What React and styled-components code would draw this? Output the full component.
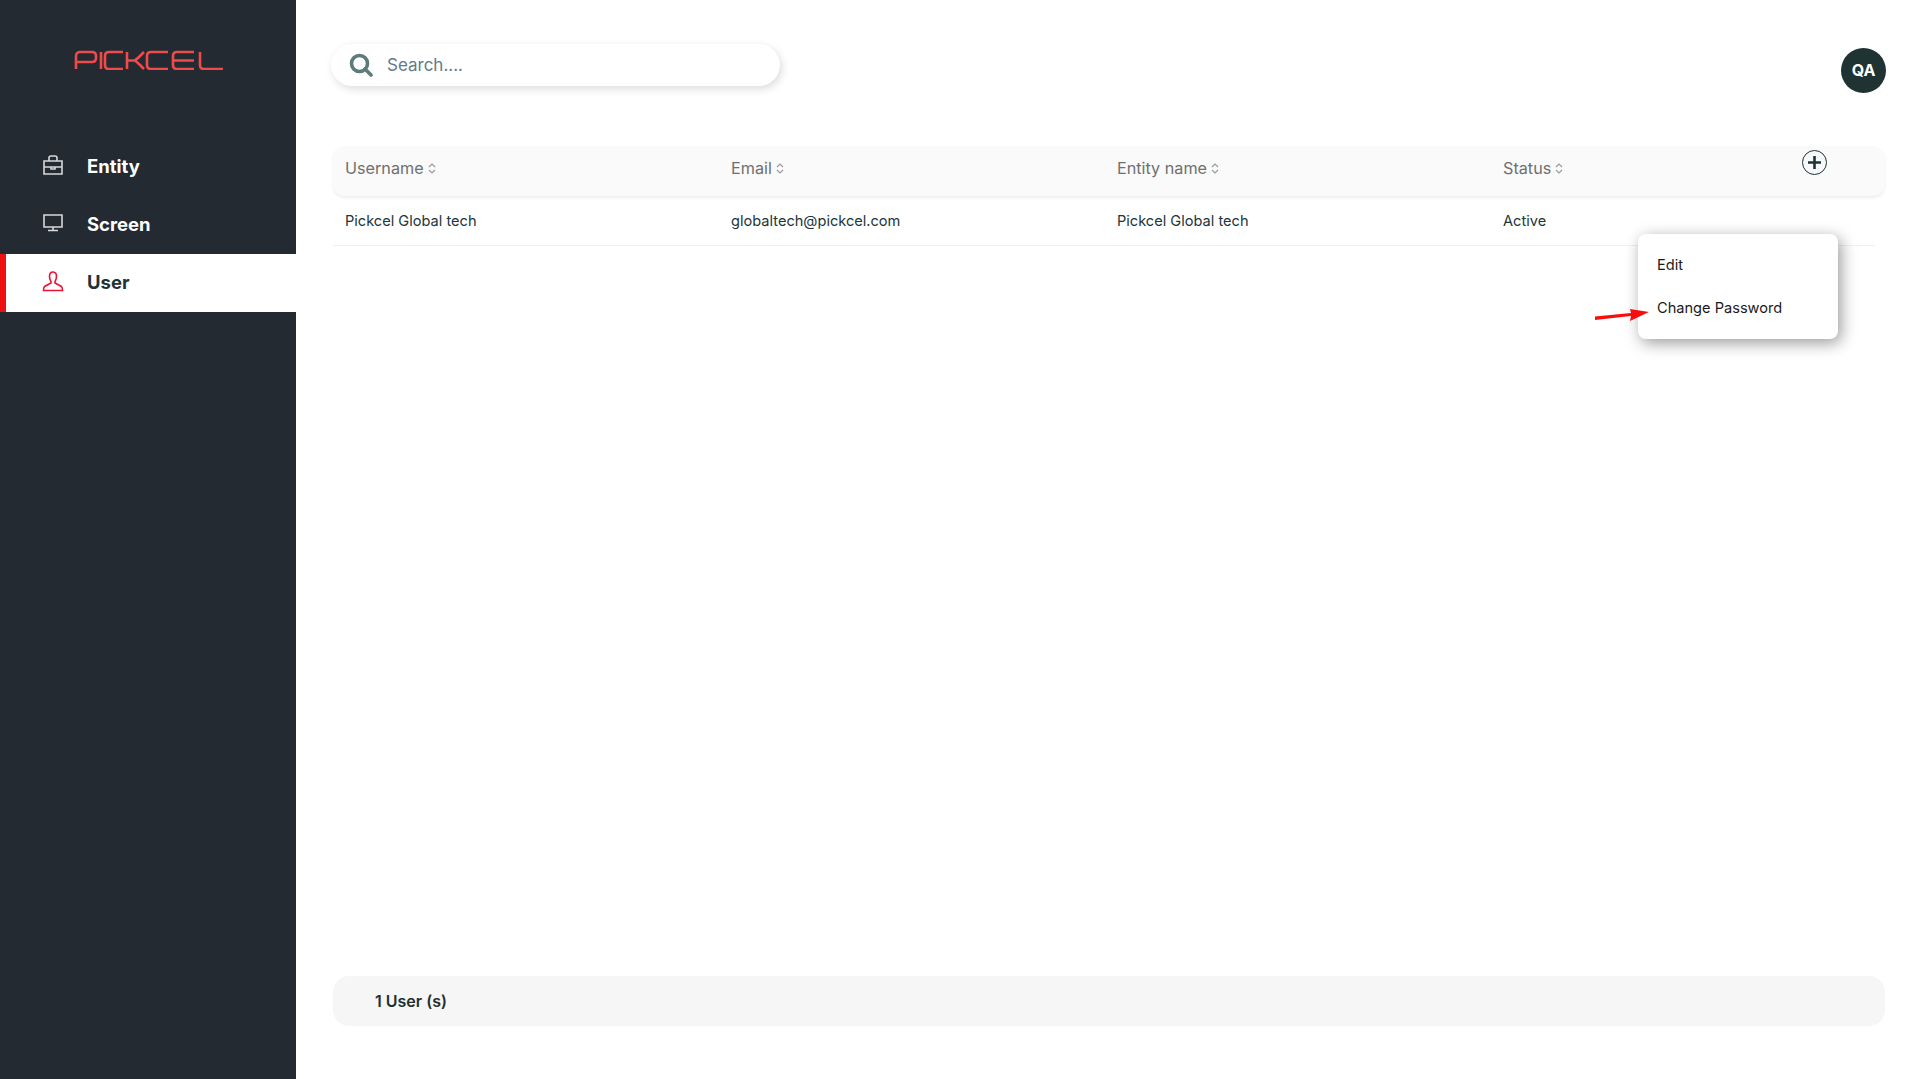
import React from "react";
import styled, { createGlobalStyle } from "styled-components";

const GlobalStyle = createGlobalStyle`
  html, body {
    margin: 0;
    padding: 0;
    background: #fff;
    font-family: "Inter", "Liberation Sans", sans-serif;
  }
  * { box-sizing: border-box; }
`;

const Page = styled.div`
  display: flex;
  width: 100%;
  height: 1079px;
  overflow: hidden;
`;

const Sidebar = styled.aside`
  width: 296px;
  flex-shrink: 0;
  background: #232a31;
  padding-top: 50px;
`;

const LogoWrap = styled.div`
  height: 88px;
  padding-left: 74px;
`;

const NavItem = styled.div`
  display: flex;
  align-items: center;
  height: 58px;
  padding-left: ${(p) => (p.$active ? "36px" : "42px")};
  padding-bottom: 2px;
  gap: 23px;
  font-size: 18.500px;
  font-weight: 700;
  color: ${(p) => (p.$active ? "#1f3238" : "#fff")};
  background: ${(p) => (p.$active ? "#fff" : "transparent")};
  border-left: ${(p) => (p.$active ? "6px solid #ee1111" : "none")};
`;

const NavIcon = styled.svg`
  width: 22px;
  height: 22px;
  flex-shrink: 0;
  fill: none;
  stroke: ${(p) => p.$color};
  stroke-width: 1.600;
  margin-top: -2px;
`;

const Main = styled.main`
  flex: 1;
  display: flex;
  flex-direction: column;
  padding: 44px 31px 53px 35px;
  position: relative;
  min-width: 0;
`;

const TopBar = styled.div`
  display: flex;
  justify-content: space-between;
  align-items: flex-start;
  height: 102px;
`;

const SearchBox = styled.div`
  display: flex;
  align-items: center;
  width: 449px;
  height: 42px;
  padding-left: 18px;
  gap: 14px;
  border-radius: 21px;
  background: #fff;
  box-shadow: 2px 3px 8px rgba(0, 0, 0, 0.14);
  color: #647a8a;
  font-size: 17px;
`;

const Avatar = styled.div`
  width: 45px;
  height: 45px;
  margin-top: 4px;
  padding-bottom: 1px;
  border-radius: 50%;
  background: #1f3333;
  color: #fff;
  font-size: 16px;
  font-weight: 700;
  display: flex;
  align-items: center;
  justify-content: center;
`;

const Table = styled.div`
  margin: 0 1px 0 2px;
`;

const HeaderRow = styled.div`
  display: grid;
  grid-template-columns: repeat(4, 386px) 1fr;
  align-items: center;
  height: 50px;
  padding: 0 0 6px 12px;
  border-radius: 12px;
  background: #fafafa;
  box-shadow: 0 2px 3px rgba(0, 0, 0, 0.07);
  color: #6f6f6f;
  font-size: 16.200px;
  position: relative;
`;

const HeaderCell = styled.div`
  display: flex;
  align-items: center;
  gap: 4px;
`;

const SortIcon = styled.svg`
  width: 8px;
  height: 13px;
  fill: none;
  stroke: #9a9a9a;
  stroke-width: 1.200;
`;

const AddButton = styled.svg`
  position: absolute;
  top: 4px;
  right: 58px;
  width: 25px;
  height: 25px;
  fill: #f6f8fb;
  stroke: #1f3333;
`;

const BodyRow = styled.div`
  display: grid;
  grid-template-columns: repeat(4, 386px) 1fr;
  align-items: center;
  height: 50px;
  margin-right: 10px;
  padding: 1px 0 0 12px;
  border-bottom: 1px solid #efefef;
  color: #22353a;
  font-size: 14.600px;
`;

const Menu = styled.div`
  position: absolute;
  top: 234px;
  left: 1342px;
  width: 200px;
  height: 105px;
  padding: 9px 19px;
  border-radius: 8px;
  background: #fff;
  box-shadow: 3px 4px 16px rgba(0, 0, 0, 0.4);
`;

const MenuItem = styled.div`
  height: 43px;
  display: flex;
  align-items: center;
  color: #1a1a1a;
  font-size: 14.600px;
`;

const Arrow = styled.svg`
  position: absolute;
  top: 308px;
  left: 1298px;
  width: 58px;
  height: 14px;
  fill: #f80d0d;
`;

const Footer = styled.div`
  margin: auto 1px 0 2px;
  height: 50px;
  padding-left: 42px;
  display: flex;
  align-items: center;
  border-radius: 16px;
  background: #f6f6f6;
  color: #22302f;
  font-size: 16px;
  font-weight: 600;
`;

const Logo = () => (
  <svg width="150" height="20" viewBox="0 0 150 20" fill="none" stroke="#f04a4a" strokeWidth="2.600">
    <path d="M2 19V6C2 3.500 3.500 2 6 2H18C20.500 2 22 3.500 22 6V8C22 10.500 20.500 12 18 12H3" />
    <path d="M27 2V19" />
    <path d="M49 2H35C32.500 2 31 3.500 31 6V15C31 17.500 32.500 19 35 19H49" />
    <path d="M53 2V19M53 10.500H60C62 10.500 64 8 70 2M60 10.500C62 10.500 64 13 70 19" />
    <path d="M94 2H77C74.500 2 73 3.500 73 6V15C73 17.500 74.500 19 77 19H94" />
    <path d="M120 2H103C100.500 2 99 3.500 99 6V15C99 17.500 100.500 19 103 19H120M99 10.500H120" />
    <path d="M126 2V15C126 17.500 127.500 19 130 19H149" />
  </svg>
);

const SortArrows = () => (
  <SortIcon viewBox="0 0 8 13">
    <path d="M1 5L4 2L7 5M1 8L4 11L7 8" />
  </SortIcon>
);

const columns = ["Username", "Email", "Entity name", "Status"];
const row = ["Pickcel Global tech", "globaltech@pickcel.com", "Pickcel Global tech", "Active"];

export default function App() {
  return (
    <Page>
      <GlobalStyle />
      <Sidebar>
        <LogoWrap>
          <Logo />
        </LogoWrap>
        <NavItem>
          <NavIcon viewBox="0 0 22 22" $color="#d6d8da">
            <path d="M2 7H20V20H2ZM2 13H20M7 7V4C7 2.500 8 2 9 2H13C14 2 15 2.500 15 4V7M9 13V15H13V13" />
          </NavIcon>
          Entity
        </NavItem>
        <NavItem>
          <NavIcon viewBox="0 0 22 22" $color="#d6d8da">
            <path d="M2 3H20V15H2ZM11 15V18M6 18.500H16" />
          </NavIcon>
          Screen
        </NavItem>
        <NavItem $active>
          <NavIcon viewBox="0 0 22 22" $color="#ee1133">
            <path d="M11 2C8.500 2 7.500 4 7.500 6.500C7.500 9 8.500 10.500 9 11.500V13L2.500 16.500C1.500 17.500 1.500 19 1.500 20.500H20.500C20.500 19 20.500 17.500 19.500 16.500L13 13V11.500C13.500 10.500 14.500 9 14.500 6.500C14.500 4 13.500 2 11 2Z" />
          </NavIcon>
          User
        </NavItem>
      </Sidebar>
      <Main>
        <TopBar>
          <SearchBox>
            <svg width="24" height="24" viewBox="0 0 24 24" fill="none" stroke="#5f7a7c" strokeWidth="3.600">
              <circle cx="10.500" cy="10.500" r="8" />
              <path d="M16 16L22 22" strokeLinecap="round" />
            </svg>
            Search....
          </SearchBox>
          <Avatar>QA</Avatar>
        </TopBar>
        <Table>
          <HeaderRow>
            {columns.map((name) => (
              <HeaderCell key={name}>
                {name}
                <SortArrows />
              </HeaderCell>
            ))}
            <AddButton viewBox="0 0 25 25">
              <circle cx="12.500" cy="12.500" r="12" />
              <path d="M12.500 6V19M6 12.500H19" strokeWidth="2.600" />
            </AddButton>
          </HeaderRow>
          <BodyRow>
            {row.map((value, i) => (
              <div key={i}>{value}</div>
            ))}
          </BodyRow>
        </Table>
        <Menu>
          <MenuItem>Edit</MenuItem>
          <MenuItem>Change Password</MenuItem>
        </Menu>
        <Arrow viewBox="0 0 58 14">
          <path d="M1 8.500L37 5L36 1L55 4L36 13L37 8L1 12Z" />
        </Arrow>
        <Footer>1 User (s)</Footer>
      </Main>
    </Page>
  );
}
